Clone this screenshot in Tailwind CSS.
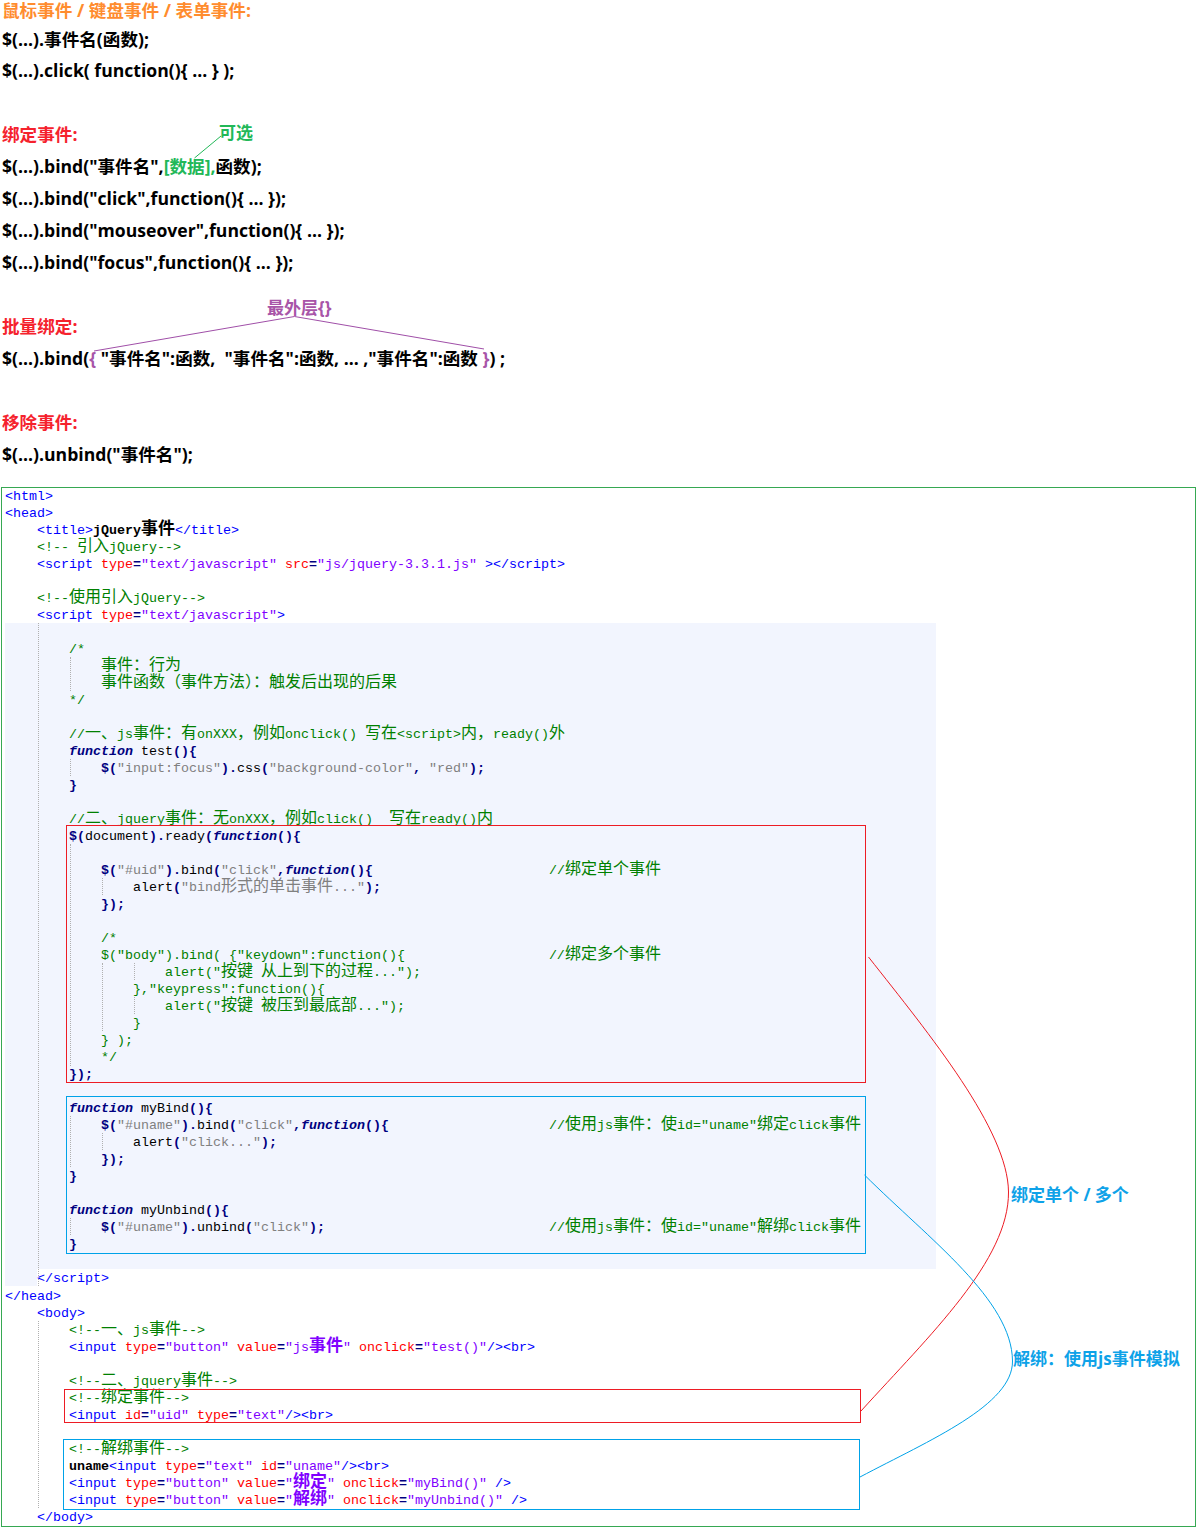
<!DOCTYPE html>
<html lang="zh">
<head>
<meta charset="utf-8">
<title>jQuery事件</title>
<script src="https://cdn.jsdelivr.net/npm/@tailwindcss/browser@4"></script>
</head>
<body class="bg-white">
<div class="relative w-[1200px] h-[1533px] overflow-hidden">
  <!-- notes -->
  <div class="h-[487px] font-['Open_Sans','Noto_Sans_CJK_SC',sans-serif] font-bold text-[17.6px] text-black [&>div]:h-[32px] [&>div]:leading-[32px] [&>div]:pl-[2px] [&>div]:whitespace-pre">
    <div class="!h-[23px] !leading-[20px] text-[#ff8c2e]">鼠标事件 / 键盘事件 / 表单事件:</div>
    <div class="!h-[31px]">$(...).事件名(函数);</div>
    <div>$(...).click( function(){ ... } );</div>
    <div></div>
    <div class="text-[#f5222d]">绑定事件:</div>
    <div>$(...).bind("事件名",<span class="text-[#22b858]">[数据],</span>函数);</div>
    <div>$(...).bind("click",function(){ ... });</div>
    <div>$(...).bind("mouseover",function(){ ... });</div>
    <div>$(...).bind("focus",function(){ ... });</div>
    <div></div>
    <div class="text-[#f5222d]">批量绑定:</div>
    <div>$(...).bind(<span class="text-[#a855a8]">{</span> "事件名":函数,  "事件名":函数, ... ,"事件名":函数 <span class="text-[#a855a8]">}</span>) ;</div>
    <div></div>
    <div class="text-[#f5222d]">移除事件:</div>
    <div>$(...).unbind("事件名");</div>
  </div>

  <!-- code panel -->
  <div class="relative ml-[1px] w-[1195px] h-[1040px] border border-[#36a852]">
    <div class="absolute left-[3px] top-[135px] w-[931px] h-[646px] bg-[#f2f5fe]"></div>
    <div class="absolute left-[3px] top-[781px] w-[32px] h-[17px] bg-[#f2f5fe]"></div>

    <div class="relative pl-[3px] font-['Liberation_Mono','Noto_Sans_CJK_SC',monospace] text-[13.33px] leading-[17px] text-black [&>div]:h-[17px] [&>div]:whitespace-pre [&_b]:text-[#000080] [&_em]:font-bold [&_em]:text-[#000080]">
<div class="text-[#0000ff]">&lt;html&gt;</div>
<div class="text-[#0000ff]">&lt;head&gt;</div>
<div class="text-[#0000ff]">    &lt;title&gt;<span class="text-black font-bold">jQuery<span class="text-[17px] leading-[10px]">事件</span></span>&lt;/title&gt;</div>
<div class="text-[#008000]">    &lt;!-- <span class="text-[16px]">引入</span>jQuery--&gt;</div>
<div class="text-[#0000ff]">    &lt;script <span class="text-[#ff0000]">type</span><b>=</b><span class="text-[#8000ff]">"text/javascript"</span> <span class="text-[#ff0000]">src</span><b>=</b><span class="text-[#8000ff]">"js/jquery-3.3.1.js"</span> &gt;&lt;/script&gt;</div>
<div></div>
<div class="text-[#008000]">    &lt;!--<span class="text-[16px]">使用引入</span>jQuery--&gt;</div>
<div class="text-[#0000ff]">    &lt;script <span class="text-[#ff0000]">type</span><b>=</b><span class="text-[#8000ff]">"text/javascript"</span>&gt;</div>
<div></div>
<div class="text-[#008000]">        /*</div>
<div class="text-[#008000]">            <span class="text-[16px]">事件：行为</span></div>
<div class="text-[#008000]">            <span class="text-[16px]">事件函数（事件方法）：触发后出现的后果</span></div>
<div class="text-[#008000]">        */</div>
<div></div>
<div class="text-[#008000]">        //<span class="text-[16px]">一、</span>js<span class="text-[16px]">事件：有</span>onXXX<span class="text-[16px]">，例如</span>onclick() <span class="text-[16px]">写在</span>&lt;script&gt;<span class="text-[16px]">内，</span>ready()<span class="text-[16px]">外</span></div>
<div>        <em>function</em> test<b>(){</b></div>
<div>            <b>$(</b><span class="text-[#808080]">"input:focus"</span><b>).</b>css<b>(</b><span class="text-[#808080]">"background-color"</span><b>,</b> <span class="text-[#808080]">"red"</span><b>);</b></div>
<div>        <b>}</b></div>
<div></div>
<div class="text-[#008000]">        //<span class="text-[16px]">二、</span>jquery<span class="text-[16px]">事件：无</span>onXXX<span class="text-[16px]">，例如</span>click()  <span class="text-[16px]">写在</span>ready()<span class="text-[16px]">内</span></div>
<div>        <b>$(</b>document<b>).</b>ready<b>(</b><em>function</em><b>(){</b></div>
<div></div>
<div>            <b>$(</b><span class="text-[#808080]">"#uid"</span><b>).</b>bind<b>(</b><span class="text-[#808080]">"click"</span><b>,</b><em>function</em><b>(){</b>                      <span class="text-[#008000]">//<span class="text-[16px]">绑定单个事件</span></span></div>
<div>                alert<b>(</b><span class="text-[#808080]">"bind<span class="text-[16px]">形式的单击事件</span>..."</span><b>);</b></div>
<div>            <b>});</b></div>
<div></div>
<div class="text-[#008000]">            /*</div>
<div class="text-[#008000]">            $("body").bind( {"keydown":function(){                  //<span class="text-[16px]">绑定多个事件</span></div>
<div class="text-[#008000]">                    alert("<span class="text-[16px]">按键</span> <span class="text-[16px]">从上到下的过程</span>...");</div>
<div class="text-[#008000]">                },"keypress":function(){</div>
<div class="text-[#008000]">                    alert("<span class="text-[16px]">按键</span> <span class="text-[16px]">被压到最底部</span>...");</div>
<div class="text-[#008000]">                }</div>
<div class="text-[#008000]">            } );</div>
<div class="text-[#008000]">            */</div>
<div>        <b>});</b></div>
<div></div>
<div>        <em>function</em> myBind<b>(){</b></div>
<div>            <b>$(</b><span class="text-[#808080]">"#uname"</span><b>).</b>bind<b>(</b><span class="text-[#808080]">"click"</span><b>,</b><em>function</em><b>(){</b>                    <span class="text-[#008000]">//<span class="text-[16px]">使用</span>js<span class="text-[16px]">事件：使</span>id="uname"<span class="text-[16px]">绑定</span>click<span class="text-[16px]">事件</span></span></div>
<div>                alert<b>(</b><span class="text-[#808080]">"click..."</span><b>);</b></div>
<div>            <b>});</b></div>
<div>        <b>}</b></div>
<div></div>
<div>        <em>function</em> myUnbind<b>(){</b></div>
<div>            <b>$(</b><span class="text-[#808080]">"#uname"</span><b>).</b>unbind<b>(</b><span class="text-[#808080]">"click"</span><b>);</b>                            <span class="text-[#008000]">//<span class="text-[16px]">使用</span>js<span class="text-[16px]">事件：使</span>id="uname"<span class="text-[16px]">解绑</span>click<span class="text-[16px]">事件</span></span></div>
<div>        <b>}</b></div>
<div></div>
<div class="text-[#0000ff] !h-[18px]">    &lt;/script&gt;</div>
<div class="text-[#0000ff]">&lt;/head&gt;</div>
<div class="text-[#0000ff]">    &lt;body&gt;</div>
<div class="text-[#008000]">        &lt;!--<span class="text-[16px]">一、</span>js<span class="text-[16px]">事件</span>--&gt;</div>
<div class="text-[#0000ff]">        &lt;input <span class="text-[#ff0000]">type</span><b>=</b><span class="text-[#8000ff]">"button"</span> <span class="text-[#ff0000]">value</span><b>=</b><span class="text-[#8000ff]">"js<span class="text-[17px] leading-[10px] font-bold">事件</span>"</span> <span class="text-[#ff0000]">onclick</span><b>=</b><span class="text-[#8000ff]">"test()"</span>/&gt;&lt;br&gt;</div>
<div></div>
<div class="text-[#008000]">        &lt;!--<span class="text-[16px]">二、</span>jquery<span class="text-[16px]">事件</span>--&gt;</div>
<div class="text-[#008000]">        &lt;!--<span class="text-[16px]">绑定事件</span>--&gt;</div>
<div class="text-[#0000ff]">        &lt;input <span class="text-[#ff0000]">id</span><b>=</b><span class="text-[#8000ff]">"uid"</span> <span class="text-[#ff0000]">type</span><b>=</b><span class="text-[#8000ff]">"text"</span>/&gt;&lt;br&gt;</div>
<div></div>
<div class="text-[#008000]">        &lt;!--<span class="text-[16px]">解绑事件</span>--&gt;</div>
<div class="text-[#0000ff]">        <span class="text-black font-bold">uname</span>&lt;input <span class="text-[#ff0000]">type</span><b>=</b><span class="text-[#8000ff]">"text"</span> <span class="text-[#ff0000]">id</span><b>=</b><span class="text-[#8000ff]">"uname"</span>/&gt;&lt;br&gt;</div>
<div class="text-[#0000ff]">        &lt;input <span class="text-[#ff0000]">type</span><b>=</b><span class="text-[#8000ff]">"button"</span> <span class="text-[#ff0000]">value</span><b>=</b><span class="text-[#8000ff]">"<span class="text-[17px] leading-[10px] font-bold">绑定</span>"</span> <span class="text-[#ff0000]">onclick</span><b>=</b><span class="text-[#8000ff]">"myBind()"</span> /&gt;</div>
<div class="text-[#0000ff]">        &lt;input <span class="text-[#ff0000]">type</span><b>=</b><span class="text-[#8000ff]">"button"</span> <span class="text-[#ff0000]">value</span><b>=</b><span class="text-[#8000ff]">"<span class="text-[17px] leading-[10px] font-bold">解绑</span>"</span> <span class="text-[#ff0000]">onclick</span><b>=</b><span class="text-[#8000ff]">"myUnbind()"</span> /&gt;</div>
<div class="text-[#0000ff]">    &lt;/body&gt;</div>
    </div>
  </div>

  <!-- indent guides -->
  <div class="absolute left-[38px] top-[623px] h-[663px] border-l border-dotted border-[#b0b0b0]"></div>
  <div class="absolute left-[38px] top-[1321px] h-[187px] border-l border-dotted border-[#b0b0b0]"></div>
  <div class="absolute left-[70px] top-[657px] h-[34px] border-l border-dotted border-[#b0b0b0]"></div>
  <div class="absolute left-[70px] top-[759px] h-[17px] border-l border-dotted border-[#b0b0b0]"></div>
  <div class="absolute left-[70px] top-[844px] h-[222px] border-l border-dotted border-[#b0b0b0]"></div>
  <div class="absolute left-[70px] top-[1116px] h-[51px] border-l border-dotted border-[#b0b0b0]"></div>
  <div class="absolute left-[70px] top-[1218px] h-[17px] border-l border-dotted border-[#b0b0b0]"></div>
  <div class="absolute left-[102px] top-[878px] h-[17px] border-l border-dotted border-[#b0b0b0]"></div>
  <div class="absolute left-[102px] top-[963px] h-[68px] border-l border-dotted border-[#b0b0b0]"></div>
  <div class="absolute left-[102px] top-[1133px] h-[17px] border-l border-dotted border-[#b0b0b0]"></div>
  <div class="absolute left-[134px] top-[963px] h-[17px] border-l border-dotted border-[#b0b0b0]"></div>
  <div class="absolute left-[134px] top-[997px] h-[17px] border-l border-dotted border-[#b0b0b0]"></div>

  <!-- call-out frames -->
  <div class="absolute left-[66px] top-[825px] w-[800px] h-[258px] border border-[#ed1c24]"></div>
  <div class="absolute left-[66px] top-[1096px] w-[800px] h-[158px] border border-[#00a2e8]"></div>
  <div class="absolute left-[64px] top-[1389px] w-[797px] h-[34px] border border-[#ed1c24]"></div>
  <div class="absolute left-[63px] top-[1439px] w-[797px] h-[71px] border border-[#00a2e8]"></div>

  <!-- connectors -->
  <svg class="absolute left-0 top-0" width="1200" height="1533" viewBox="0 0 1200 1533" fill="none">
    <path d="M194.5 158L221 136" stroke="#22b858"/>
    <path d="M94 351L294.5 316.5L484 349" stroke="#a04fa8"/>
    <path d="M868.5 957C930 1035 1008 1130 1008.5 1192C1009 1260 930 1335 861 1411" stroke="#ed1c24"/>
    <path d="M864.5 1175C930 1240 1012 1300 1012.5 1361C1013 1405 930 1440 860 1477" stroke="#00a2e8"/>
  </svg>

  <!-- labels -->
  <div class="absolute left-[219px] top-[121px] leading-[24px] font-['Open_Sans','Noto_Sans_CJK_SC',sans-serif] font-bold text-[17px] text-[#22b858]">可选</div>
  <div class="absolute left-[267px] top-[296px] leading-[24px] font-['Open_Sans','Noto_Sans_CJK_SC',sans-serif] font-bold text-[17px] text-[#a855a8]">最外层{}</div>
  <div class="absolute left-[1011px] top-[1183px] leading-[24px] whitespace-pre font-['Open_Sans','Noto_Sans_CJK_SC',sans-serif] font-bold text-[17px] text-[#0ea2e8]">绑定单个 / 多个</div>
  <div class="absolute left-[1013px] top-[1347px] leading-[24px] whitespace-pre font-['Open_Sans','Noto_Sans_CJK_SC',sans-serif] font-bold text-[17px] text-[#0ea2e8]">解绑：使用js事件模拟</div>
</div>
</body>
</html>
